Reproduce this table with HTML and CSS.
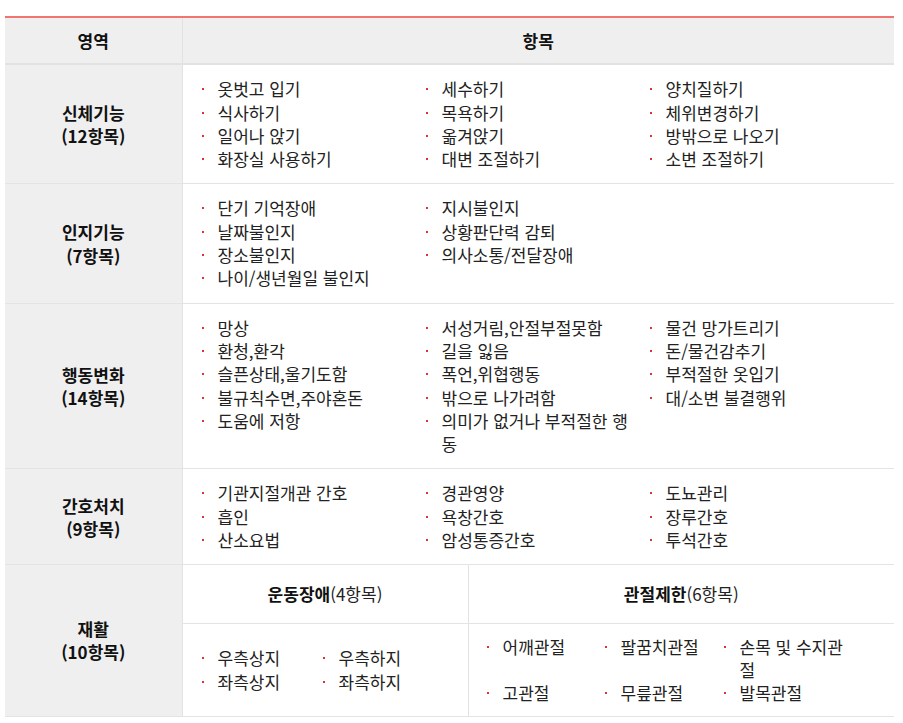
FILE: index.html
```html
<!DOCTYPE html>
<html lang="ko">
<head>
<meta charset="utf-8">
<title>장기요양 항목</title>
<link rel="stylesheet" href="styles.css">
</head>
<body>
<div class="wrap">
<table class="care">
  <colgroup><col class="c-area"><col></colgroup>
  <thead>
    <tr><th>영역</th><th>항목</th></tr>
  </thead>
  <tbody>
    <tr>
      <th class="label">신체기능<br>(12항목)</th>
      <td class="cell">
        <div class="cols">
          <ul class="list"><li>옷벗고 입기</li><li>식사하기</li><li>일어나 앉기</li><li>화장실 사용하기</li></ul>
          <ul class="list"><li>세수하기</li><li>목욕하기</li><li>옮겨앉기</li><li>대변 조절하기</li></ul>
          <ul class="list"><li>양치질하기</li><li>체위변경하기</li><li>방밖으로 나오기</li><li>소변 조절하기</li></ul>
        </div>
      </td>
    </tr>
    <tr>
      <th class="label">인지기능<br>(7항목)</th>
      <td class="cell">
        <div class="cols">
          <ul class="list"><li>단기 기억장애</li><li>날짜불인지</li><li>장소불인지</li><li>나이/생년월일 불인지</li></ul>
          <ul class="list"><li>지시불인지</li><li>상황판단력 감퇴</li><li>의사소통/전달장애</li></ul>
          <ul class="list"></ul>
        </div>
      </td>
    </tr>
    <tr>
      <th class="label">행동변화<br>(14항목)</th>
      <td class="cell">
        <div class="cols">
          <ul class="list"><li>망상</li><li>환청,환각</li><li>슬픈상태,울기도함</li><li>불규칙수면,주야혼돈</li><li>도움에 저항</li></ul>
          <ul class="list"><li>서성거림,안절부절못함</li><li>길을 잃음</li><li>폭언,위협행동</li><li>밖으로 나가려함</li><li>의미가 없거나 부적절한 행동</li></ul>
          <ul class="list"><li>물건 망가트리기</li><li>돈/물건감추기</li><li>부적절한 옷입기</li><li>대/소변 불결행위</li></ul>
        </div>
      </td>
    </tr>
    <tr>
      <th class="label">간호처치<br>(9항목)</th>
      <td class="cell">
        <div class="cols">
          <ul class="list"><li>기관지절개관 간호</li><li>흡인</li><li>산소요법</li></ul>
          <ul class="list"><li>경관영양</li><li>욕창간호</li><li>암성통증간호</li></ul>
          <ul class="list"><li>도뇨관리</li><li>장루간호</li><li>투석간호</li></ul>
        </div>
      </td>
    </tr>
    <tr class="last">
      <th class="label">재활<br>(10항목)</th>
      <td class="nested">
        <div class="rehab">
          <div class="sub-head"><strong>운동장애</strong>(4항목)</div>
          <div class="sub-head right"><strong>관절제한</strong>(6항목)</div>
          <div class="sub-body">
            <ul class="grid2 list"><li>우측상지</li><li>우측하지</li><li>좌측상지</li><li>좌측하지</li></ul>
          </div>
          <div class="sub-body right">
            <ul class="grid3 list"><li>어깨관절</li><li>팔꿈치관절</li><li>손목 및 수지관절</li><li>고관절</li><li>무릎관절</li><li>발목관절</li></ul>
          </div>
        </div>
      </td>
    </tr>
  </tbody>
</table>
</div>
</body>
</html>
```

FILE: styles.css
```css
html, body {
  margin: 0;
  padding: 0;
  background: #fff;
}

body {
  font-family: "Noto Sans CJK KR", "Noto Sans", sans-serif;
  font-size: 17px;
  line-height: 23.3px;
  color: #222;
}

.wrap {
  padding: 16px 9px 0 5px;
}

.care {
  width: 889px;
  border-collapse: collapse;
  table-layout: fixed;
  border-top: 2px solid #f27472;
}

.c-area {
  width: 177px;
}

.care thead th {
  background: #efefef;
  font-weight: 700;
  color: #111;
  text-align: center;
  padding: 11px 0;
  border-bottom: 2px solid #e2e2e2;
  border-left: 1px solid #e2e2e2;
}

.care thead th:first-child {
  border-left: 0;
}

.care tbody tr {
  border-bottom: 1px solid #e4e4e4;
}

.label {
  background: #efefef;
  font-weight: 700;
  color: #111;
  text-align: center;
  vertical-align: middle;
  padding: 0;
  border-right: 1px solid #e2e2e2;
}

.cell {
  padding: 12px 0 13px 19px;
  vertical-align: top;
}

.cols {
  display: flex;
}

.cols .list {
  width: 224px;
  flex: none;
}

.cols .list li {
  padding-right: 13px;
}

.list {
  list-style: none;
  margin: 0;
  padding: 0;
}

.list li {
  position: relative;
  padding-left: 16px;
  word-break: break-all;
}

.list li::before {
  content: "";
  position: absolute;
  left: 0;
  top: 11px;
  width: 2px;
  height: 2px;
  background: #d93434;
}

.nested {
  padding: 0;
  vertical-align: top;
}

.rehab {
  display: grid;
  grid-template-columns: 285px 1fr;
}

.sub-head {
  text-align: center;
  padding: 17px 0 17px;
  border-bottom: 1px solid #e4e4e4;
}

.sub-head strong {
  font-weight: 700;
  color: #111;
}

.right {
  border-left: 1px solid #e2e2e2;
}

.sub-body {
  display: flex;
  align-items: center;
  padding: 11px 0 11px 19px;
}

.sub-body.right {
  padding-left: 18px;
  align-items: flex-start;
}

.grid2 {
  display: grid;
  grid-template-columns: 121px 121px;
}

.grid3 {
  display: grid;
  grid-template-columns: 118px 119px 121px;
}
```
